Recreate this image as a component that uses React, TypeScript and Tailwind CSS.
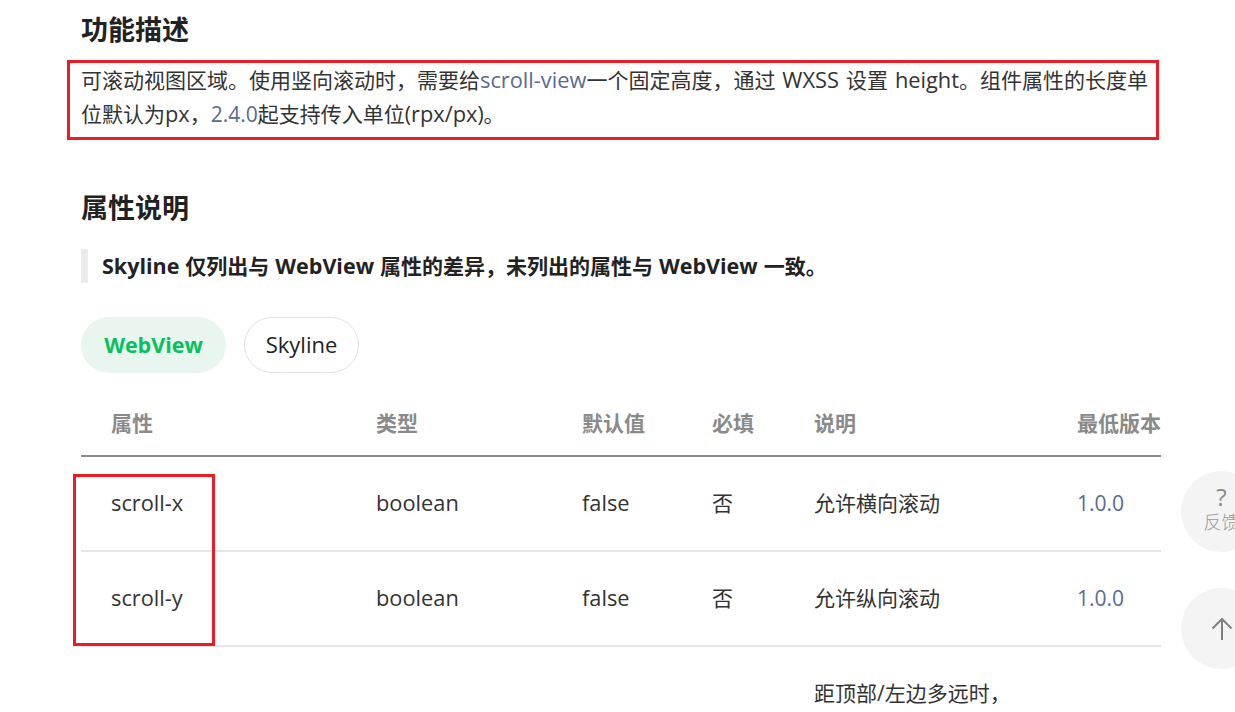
import React from "react";

const font = { fontFamily: '"Open Sans","Noto Sans CJK SC",sans-serif' };
const cols = ["w-[265px]", "w-[206px]", "w-[130px]", "w-[102px]", "w-[263px]", "w-[114px]"];

function L({ children, className = "" }: { children: React.ReactNode; className?: string }) {
  return <span className={`text-[21.8px] ${className}`}>{children}</span>;
}
function B({ children }: { children: React.ReactNode }) {
  return <span className="text-[21.5px]">{children}</span>;
}

function Row({ name, desc }: { name: string; desc: string }) {
  return (
    <div className="flex h-[95px] items-center border-b-2 border-[#e6e6e6] pb-[2px] text-[21px] leading-[32px] text-[#333333]">
      <div className={`${cols[0]} pl-[30px]`}>
        <L>{name}</L>
      </div>
      <div className={`${cols[1]} pl-[30px]`}>
        <L>boolean</L>
      </div>
      <div className={`${cols[2]} pl-[30px]`}>
        <L>false</L>
      </div>
      <div className={`${cols[3]} pl-[30px]`}>否</div>
      <div className={`${cols[4]} pl-[30px]`}>{desc}</div>
      <div className={`${cols[5]} pl-[30px] text-[#576b95]`}>1.0.0</div>
    </div>
  );
}

export default function App() {
  const heads = ["属性", "类型", "默认值", "必填", "说明", "最低版本"];
  return (
    <div className="relative h-[712px] w-[1235px] overflow-hidden bg-white" style={font}>
      <div className="ml-[81px] w-[1080px] text-[#1a1a1a]">
        <h2 className="pt-[11px] text-[27px] font-bold leading-[38px] text-[#222222]">功能描述</h2>
        <div className="relative mt-[14px] whitespace-nowrap text-[21px] leading-[34px] text-[#333333] [word-spacing:1.5px]">
          <p className="h-[34px]">
            可滚动视图区域。使用竖向滚动时，需要给<L className="text-[#576b95]">scroll-view</L>一个固定高度，通过 <L>WXSS</L> 设置 <L>height</L>。组件属性的长度单
          </p>
          <p className="h-[34px]">
            位默认为<L>px</L>，<span className="text-[#576b95]">2.4.0</span>起支持传入单位(<L>rpx/px</L>)。
          </p>
          <div className="absolute left-[-14px] top-[-3px] h-[80px] w-[1092px] border-[3px] border-[#ed1c24]" />
        </div>
        <h2 className="mt-[58px] text-[27px] font-bold leading-[38px] text-[#222222]">属性说明</h2>
        <div className="mt-[22px] h-[34px] whitespace-nowrap border-l-[7px] border-[#ebebeb] pl-[14px] text-[21px] font-bold leading-[34px] text-[#222222] [word-spacing:0.5px]">
          <B>Skyline</B> 仅列出与 <B>WebView</B> 属性的差异，未列出的属性与 <B>WebView</B> 一致。
        </div>
        <div className="mt-[34px] flex gap-[18px] text-[22px]">
          <div className="flex h-[56px] w-[145px] items-center justify-center rounded-full bg-[#e9f6f0] text-[21.5px] font-bold text-[#07c160]">
            WebView
          </div>
          <div className="flex h-[56px] w-[115px] items-center justify-center rounded-full border border-[#e0e0e6] pb-[2px] text-[#222222]">
            Skyline
          </div>
        </div>
        <div className="relative mt-[11px]">
          <div className="flex h-[73px] items-center whitespace-nowrap border-b-2 border-[#8a8a8a] pt-[8px] text-[21px] font-bold text-[#8a8a8a]">
            {heads.map((h, i) => (
              <div key={h} className={`${cols[i]} pl-[30px]`}>
                {h}
              </div>
            ))}
          </div>
          <Row name="scroll-x" desc="允许横向滚动" />
          <Row name="scroll-y" desc="允许纵向滚动" />
          <div className="flex pt-[30px] text-[21px] leading-[32px] text-[#333333]">
            <div className="ml-[703px] pl-[30px]">距顶部/左边多远时，</div>
          </div>
          <div className="absolute left-[-8px] top-[90px] h-[172px] w-[142px] border-[3px] border-[#ed1c24]" />
        </div>
      </div>
      <div className="absolute left-[1181px] top-[471px] flex h-[81px] w-[81px] flex-col items-center justify-center rounded-full bg-[#f4f4f4] pb-[5px] text-[#999999]">
        <span className="text-[24px] leading-[26px] text-[#8a8a8a]">?</span>
        <span className="whitespace-nowrap text-[18px] font-light leading-[24px]">反馈</span>
      </div>
      <div className="absolute left-[1181px] top-[588px] flex h-[81px] w-[81px] items-center justify-center rounded-full bg-[#f4f4f4]">
        <svg width="22" height="24" viewBox="0 0 22 24" fill="none" stroke="#808080" strokeWidth="2">
          <path d="M11 23V2M1.5 11.5L11 2l9.5 9.5" />
        </svg>
      </div>
    </div>
  );
}
